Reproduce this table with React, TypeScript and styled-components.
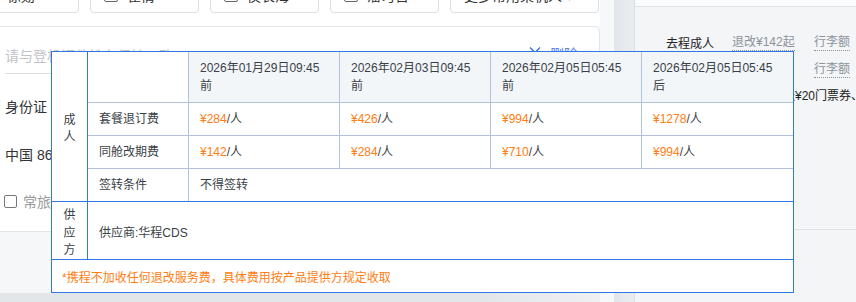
import styled, { createGlobalStyle } from "styled-components";

const GlobalStyle = createGlobalStyle`
  html, body {
    margin: 0;
    padding: 0;
  }
  body {
    background: #f3f5f7;
    font-family: "Liberation Sans", "Noto Sans CJK SC", sans-serif;
    color: #333;
    overflow: hidden;
  }
  * {
    box-sizing: border-box;
  }
`;

const Page = styled.div`
  position: relative;
  display: flex;
  width: 856px;
  height: 302px;
  overflow: hidden;
`;

const LeftCol = styled.div`
  width: 600px;
  flex-shrink: 0;
  display: flex;
  flex-direction: column;
  background: #f6f7f9;
`;

const Gutter = styled.div`
  width: 14px;
  flex-shrink: 0;
  background: #f7f8fa;
`;

const Shade = styled.div`
  width: 21px;
  flex-shrink: 0;
  background: linear-gradient(90deg, #e2e6ea, #eaedf0);
  border-right: 1px solid #d8dde2;
`;

const TopBar = styled.div`
  height: 26px;
  background: #fff;
  overflow: hidden;
`;

const ChipRow = styled.div`
  display: flex;
  gap: 11px;
  margin-top: -23px;
  margin-left: -30px;
`;

const Chip = styled.div<{ $w?: number }>`
  width: ${(p) => p.$w ?? 109}px;
  height: 36px;
  flex-shrink: 0;
  border: 1px solid #dcdfe4;
  border-radius: 4px;
  display: flex;
  align-items: center;
  gap: 9px;
  padding-left: 13px;
  font-size: 14px;
  color: #333;
`;

const Box = styled.span`
  width: 14px;
  height: 14px;
  border: 1px solid #666;
  border-radius: 2px;
  flex-shrink: 0;
  background: #fff;
`;

const Card = styled.div`
  width: 610px;
  height: 206px;
  margin-left: -10px;
  background: #fff;
  border: 1px solid #e1e4e8;
  border-radius: 6px;
  padding-left: 14px;
  display: flex;
  flex-direction: column;
`;

const NameRow = styled.div`
  height: 47px;
  display: flex;
  align-items: flex-start;
  gap: 12px;
`;

const NameInput = styled.div`
  width: 512px;
  height: 47px;
  padding-top: 19px;
  line-height: 20px;
  font-size: 14px;
  color: #bfc3c8;
  border-bottom: 1px solid #dcdfe3;
  white-space: nowrap;
  overflow: hidden;
`;

const DeleteLink = styled.div`
  display: flex;
  align-items: flex-start;
  gap: 9px;
  padding-top: 17px;
  line-height: 20px;
  font-size: 14px;
  color: #5a7fe6;

  svg {
    margin-top: 2px;
  }
`;

const Field = styled.div<{ $h: number; $pt?: number; $muted?: boolean }>`
  height: ${(p) => p.$h}px;
  padding-top: ${(p) => p.$pt ?? 0}px;
  line-height: ${(p) => (p.$pt ? 20 : p.$h)}px;
  font-size: 14px;
  color: ${(p) => (p.$muted ? "#999" : "#333")};
  display: flex;
  align-items: flex-start;
  gap: 6px;
`;

const SmallBox = styled(Box)`
  width: 13px;
  height: 13px;
  margin-top: 3px;
  margin-left: -1px;
  border-color: #777;
`;

const Spacer = styled.div`
  flex: 1;
`;

const BottomBand = styled.div`
  height: 9px;
  background: linear-gradient(90deg, #e3e6e9 80%, #eef0f2);
`;

const RightPanel = styled.div`
  flex: 1;
  display: flex;
  flex-direction: column;
  background: #f3f5f7;
`;

const PanelTop = styled.div`
  height: 7px;
  background: #fbfcfd;
  border-bottom: 1px solid #dde2e6;
`;

const Summary = styled.div`
  height: 223px;
  padding: 22px 0 0 31px;
  border-bottom: 1px solid #dfe3e7;
  font-size: 12px;
  white-space: nowrap;
  overflow: hidden;
`;

const SummaryRow = styled.div`
  display: grid;
  grid-template-columns: 66px 82px auto;
  height: 27px;
  align-items: center;
`;

const SummaryLabel = styled.span`
  color: #222;
`;

const Hint = styled.span`
  justify-self: start;
  color: #8c939b;
  line-height: 16px;
  border-bottom: 1px dotted #8c939b;
`;

const Perk = styled.div`
  height: 27px;
  line-height: 27px;
  padding-left: 105px;
  color: #222;
`;

const Popup = styled.div`
  position: absolute;
  left: 51px;
  top: 51px;
  width: 743px;
  border: 1px solid #2f78e4;
  background: #fff;
  font-size: 12px;
  color: #3a3f47;
  z-index: 10;
`;

const Section = styled.div<{ $h?: number }>`
  display: grid;
  grid-template-columns: 36px 1fr;
  border-bottom: 1px solid #2f78e4;
  ${(p) => (p.$h ? `height: ${p.$h}px;` : "")}
`;

const SideLabel = styled.div`
  border-right: 1px solid #2f78e4;
  display: flex;
  align-items: center;
  justify-content: center;
  text-align: center;
  line-height: 17.5px;
  padding-top: 5px;
`;

const Table = styled.div`
  display: grid;
  grid-template-columns: 101px repeat(4, 151px);
`;

const Cell = styled.div<{ $head?: boolean; $last?: boolean; $bottom?: boolean; $span?: number; $h: number }>`
  height: ${(p) => p.$h}px;
  padding-left: 11px;
  display: flex;
  align-items: center;
  line-height: 18px;
  background: ${(p) => (p.$head ? "#f3f6f9" : "#fff")};
  border-right: ${(p) => (p.$last ? "none" : "1px solid #b3c2d9")};
  border-bottom: ${(p) => (p.$bottom ? "none" : "1px solid #b3c2d9")};
  ${(p) => (p.$span ? `grid-column: span ${p.$span};` : "")}
`;

const Price = styled.span`
  color: #ff7d12;
`;

const SupplierText = styled.div`
  display: flex;
  align-items: center;
  padding-left: 11px;
  padding-top: 1px;
`;

const Notice = styled.div`
  height: 32px;
  display: flex;
  align-items: center;
  padding-left: 10px;
  color: #ff7d12;
`;

const deadlines = [
  ["2026年01月29日09:45", "前"],
  ["2026年02月03日09:45", "前"],
  ["2026年02月05日05:45", "前"],
  ["2026年02月05日05:45", "后"],
];

const refundFees = [284, 426, 994, 1278];
const changeFees = [142, 284, 710, 994];

const chips = ["徐勋", "崔倩", "侯长海", "潘习晋"];

function Chevron() {
  return (
    <svg width="12" height="8" viewBox="0 0 12 8" fill="none">
      <path d="M1 1.5 L6 6.5 L11 1.5" stroke="#3f6fe0" strokeWidth="1.4" />
    </svg>
  );
}

function FeeRow({ label, fees }: { label: string; fees: number[] }) {
  return (
    <>
      <Cell $h={33}>{label}</Cell>
      {fees.map((fee, i) => (
        <Cell key={i} $h={33} $last={i === fees.length - 1}>
          <Price>¥{fee}</Price>/人
        </Cell>
      ))}
    </>
  );
}

export default function App() {
  return (
    <>
      <GlobalStyle />
      <Page>
        <LeftCol>
          <TopBar>
            <ChipRow>
              {chips.map((name) => (
                <Chip key={name}>
                  <Box />
                  {name}
                </Chip>
              ))}
              <Chip $w={149}>更多常用乘机人 ▾</Chip>
            </ChipRow>
          </TopBar>
          <Card>
            <NameRow>
              <NameInput>请与登机证件姓名保持一致</NameInput>
              <DeleteLink>
                <Chevron />
                删除
              </DeleteLink>
            </NameRow>
            <Field $h={66}>身份证</Field>
            <Field $h={30}>中国 86</Field>
            <Field $h={61} $pt={22} $muted>
              <SmallBox />
              常旅客卡
            </Field>
          </Card>
          <Spacer />
          <BottomBand />
        </LeftCol>
        <Gutter />
        <Shade />
        <RightPanel>
          <PanelTop />
          <Summary>
            <SummaryRow>
              <SummaryLabel>去程成人</SummaryLabel>
              <Hint>退改¥142起</Hint>
              <Hint>行李额</Hint>
            </SummaryRow>
            <SummaryRow>
              <span />
              <span />
              <Hint>行李额</Hint>
            </SummaryRow>
            <Perk>赠送¥20门票券、景区优惠</Perk>
          </Summary>
        </RightPanel>

        <Popup>
          <Section>
            <SideLabel>
              成<br />人
            </SideLabel>
            <Table>
              <Cell $h={51} />
              {deadlines.map(([date, side], i) => (
                <Cell key={i} $h={51} $head $last={i === deadlines.length - 1}>
                  <div>
                    {date}
                    <br />
                    {side}
                  </div>
                </Cell>
              ))}
              <FeeRow label="套餐退订费" fees={refundFees} />
              <FeeRow label="同舱改期费" fees={changeFees} />
              <Cell $h={32} $bottom>签转条件</Cell>
              <Cell $h={32} $bottom $last $span={4}>不得签转</Cell>
            </Table>
          </Section>
          <Section $h={58}>
            <SideLabel>
              供<br />应<br />方
            </SideLabel>
            <SupplierText>供应商:华程CDS</SupplierText>
          </Section>
          <Notice>*携程不加收任何退改服务费，具体费用按产品提供方规定收取</Notice>
        </Popup>
      </Page>
    </>
  );
}
